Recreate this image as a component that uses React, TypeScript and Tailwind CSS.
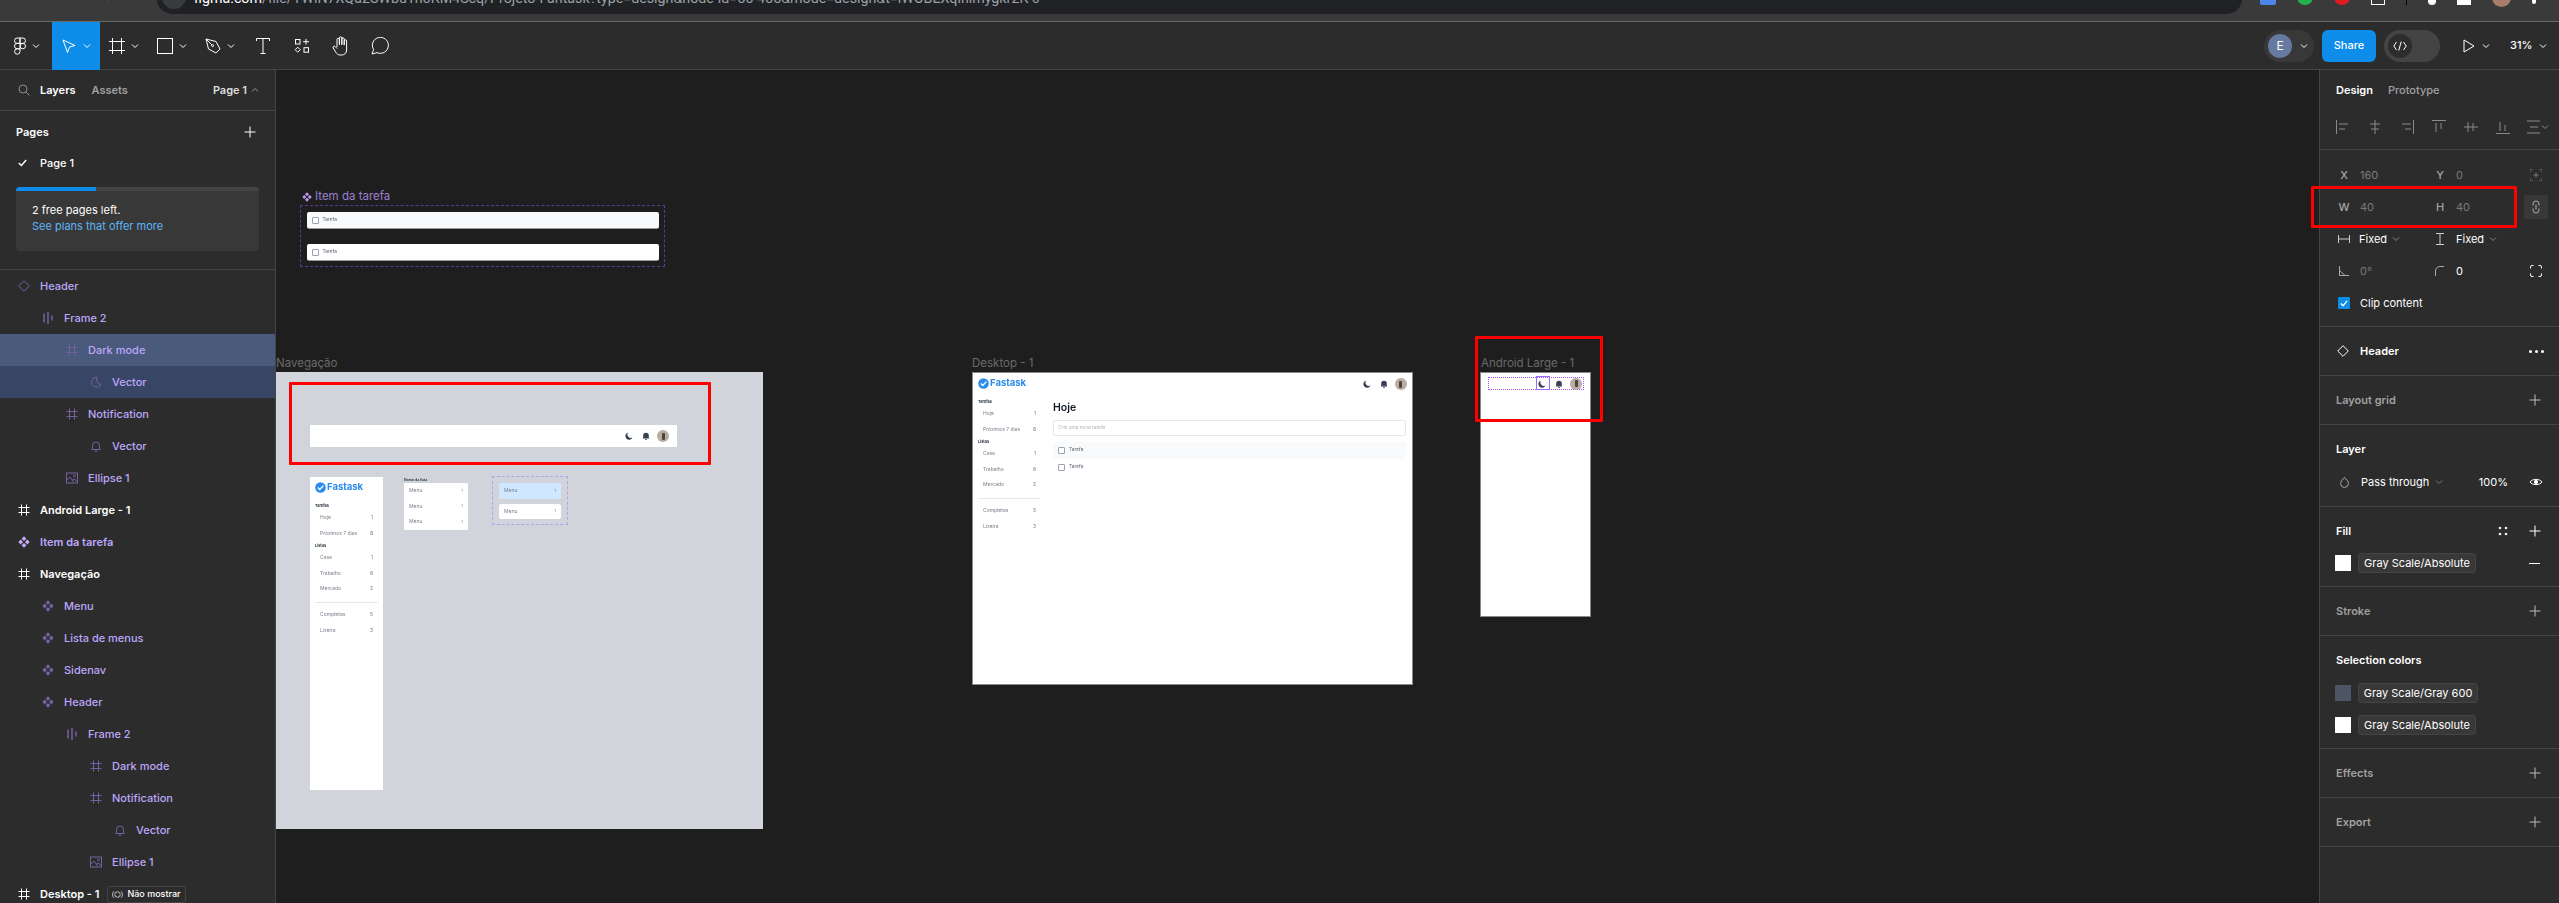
import React from "react";

const cn = (...a: (string | false | undefined)[]) => a.filter(Boolean).join(" ");

type IP = { className?: string; size?: number };
const Ic = ({ className, size = 16, children, vb = 16 }: IP & { children: React.ReactNode; vb?: number }) => (
  <svg width={size} height={size} viewBox={`0 0 ${vb} ${vb}`} fill="none" stroke="currentColor" strokeWidth={1} className={cn("shrink-0", className)}>
    {children}
  </svg>
);
const Chev = ({ className }: IP) => (
  <svg width="8" height="8" viewBox="0 0 8 8" fill="none" stroke="currentColor" strokeWidth={1} className={cn("shrink-0", className)}><path d="M1 2.5 4 5.5 7 2.5" /></svg>
);
const Plus = ({ className, size = 12 }: IP) => (
  <Ic size={size} vb={12} className={className}><path d="M6 0.5v11M0.5 6h11" /></Ic>
);
const HashI = ({ className, size = 12 }: IP) => (
  <Ic size={size} vb={12} className={className}><path d="M3.5 .5v11M8.5 .5v11M.5 3.5h11M.5 8.5h11" /></Ic>
);
const Comp = ({ className, size = 12 }: IP) => (
  <svg width={size} height={size} viewBox="0 0 12 12" fill="currentColor" className={cn("shrink-0", className)}>
    <path d="M6 .3 8.4 2.700 6 5.100 3.600 2.700ZM2.700 3.600 5.100 6 2.700 8.400 .3 6ZM9.300 3.600 11.700 6 9.300 8.400 6.900 6ZM6 6.900 8.400 9.300 6 11.700 3.600 9.300Z" />
  </svg>
);
const Diamond = ({ className, size = 12 }: IP) => (
  <Ic size={size} vb={12} className={className}><path d="M6 .7 11.3 6 6 11.3 .7 6Z" /></Ic>
);
const Bars = ({ className }: IP) => (
  <Ic size={12} vb={12} className={className} ><path d="M2 1.5v9M6 0v12M10 3.5v5" strokeWidth={1.5} /></Ic>
);
const MoonI = ({ className, size = 12 }: IP) => (
  <Ic size={size} vb={12} className={className}><path d="M7 1.2A5 5 0 1 0 11 8.6 5.5 5.5 0 0 1 7 1.2Z" /></Ic>
);
const BellI = ({ className, size = 12 }: IP) => (
  <Ic size={size} vb={12} className={className}><path d="M2.5 8.5V5.5a3.5 3.5 0 0 1 7 0v3l1 1h-9ZM4.7 11h2.6" /></Ic>
);
const ImageI = ({ className, size = 12 }: IP) => (
  <Ic size={size} vb={12} className={className}><rect x=".5" y="1" width="11" height="10" /><path d="M.5 8.5 4 5l4 5.5M6.5 8l1.5-1 3.5 2.5" /><circle cx="8.5" cy="3.7" r="1" /></Ic>
);

const iconMap: Record<string, React.FC<IP>> = { hash: HashI, comp: Comp, diamond: Diamond, bars: Bars, moon: MoonI, bell: BellI, image: ImageI };

type Layer = { n: string; l: number; i: string; top?: boolean; bg?: string; badge?: boolean };
const layers: Layer[] = [
  { n: "Header", l: 0, i: "diamond" },
  { n: "Frame 2", l: 1, i: "bars" },
  { n: "Dark mode", l: 2, i: "hash", bg: "bg-[#4a5a7c]" },
  { n: "Vector", l: 3, i: "moon", bg: "bg-[#394564]" },
  { n: "Notification", l: 2, i: "hash" },
  { n: "Vector", l: 3, i: "bell" },
  { n: "Ellipse 1", l: 2, i: "image" },
  { n: "Android Large - 1", l: 0, i: "hash", top: true },
  { n: "Item da tarefa", l: 0, i: "comp" },
  { n: "Navegação", l: 0, i: "hash", top: true },
  { n: "Menu", l: 1, i: "comp" },
  { n: "Lista de menus", l: 1, i: "comp" },
  { n: "Sidenav", l: 1, i: "comp" },
  { n: "Header", l: 1, i: "comp" },
  { n: "Frame 2", l: 2, i: "bars" },
  { n: "Dark mode", l: 3, i: "hash" },
  { n: "Notification", l: 3, i: "hash" },
  { n: "Vector", l: 4, i: "bell" },
  { n: "Ellipse 1", l: 3, i: "image" },
  { n: "Desktop - 1", l: 0, i: "hash", top: true, badge: true },
];

const indentClass = ["pl-[18px]", "pl-[42px]", "pl-[66px]", "pl-[90px]", "pl-[114px]"];

function LayerRow({ r }: { r: Layer }) {
  const Icon = iconMap[r.i];
  const isComp = r.n === "Item da tarefa";
  return (
    <div className={cn("h-8 shrink-0 flex items-center", indentClass[r.l], r.bg)}>
      <Icon className={r.top ? "text-white" : isComp ? "text-[#c4a8f5]" : "text-[#75609f]"} />
      <span className={cn("ml-[10px] text-[11px]", r.top ? "text-white font-semibold" : "text-[#bda6fb] font-medium", isComp && "font-semibold")}>{r.n}</span>
      {r.badge && (
        <span className="ml-2 h-[17px] px-1 flex items-center gap-1 rounded-[3px] border border-[#444] text-white text-[9px] font-medium">
          <svg width="11" height="11" viewBox="0 0 12 12" fill="none" stroke="#ccc"><circle cx="6" cy="6" r="3" /><path d="M2 2.5a5 5 0 0 0 0 7M10 2.5a5 5 0 0 1 0 7" /></svg>
          Não mostrar
        </span>
      )}
    </div>
  );
}

function LeftPanel() {
  return (
    <aside className="w-[276px] shrink-0 bg-[#2c2c2c] border-r border-[#444] flex flex-col overflow-hidden">
      <div className="h-[41px] shrink-0 border-b border-[#444] flex items-center pl-[18px] pr-4 text-[11px] font-semibold">
        <svg width="12" height="12" viewBox="0 0 12 12" fill="none" stroke="#8c8c8c"><circle cx="5" cy="5" r="4" /><path d="m8 8 3.5 3.5" /></svg>
        <span className="ml-[10px] text-white">Layers</span>
        <span className="ml-4 text-[#a0a0a0]">Assets</span>
        <span className="ml-auto text-[#dcdcdc]">Page 1</span>
        <Chev className="ml-1 rotate-180 text-[#999]" />
      </div>
      <div className="h-[159px] shrink-0 border-b border-[#444] flex flex-col">
        <div className="h-[40px] shrink-0 flex items-center justify-between pl-4 pr-[19px] pt-[2px]">
          <span className="text-[11px] font-semibold text-white">Pages</span>
          <Plus className="text-white" />
        </div>
        <div className="h-[24px] shrink-0 flex items-center pl-[18px] text-[11px] font-medium text-white">
          <svg width="9" height="8" viewBox="0 0 9 8" fill="none" stroke="#fff" strokeWidth={1.4}><path d="M.8 4 3.4 6.5 8.2 1" /></svg>
          <span className="ml-[13px]">Page 1</span>
        </div>
        <div className="mx-4 mt-[12px] h-[64px] shrink-0 bg-[#383838] rounded-[4px] overflow-hidden">
          <div className="h-1 bg-[#444]"><div className="h-1 w-[80px] bg-[#0d8ce9]" /></div>
          <div className="pl-4 pt-[11px] text-[11px] leading-4 text-white">
            <div>2 free pages left.</div>
            <div className="text-[#5eb5f7]">See plans that offer more</div>
          </div>
        </div>
      </div>
      <div className="flex flex-col">
        {layers.map((r, i) => <LayerRow key={i} r={r} />)}
      </div>
    </aside>
  );
}

function Toolbar() {
  const cell = "h-12 flex items-center justify-center gap-[6px] shrink-0";
  return (
    <header className="h-[48px] shrink-0 bg-[#2c2c2c] border-b border-[#444] flex items-center text-white">
      <div className={cn(cell, "w-[52px] pl-[2px]")}>
        <svg width="12" height="18" viewBox="0 0 12 18" fill="none" stroke="#fff"><path d="M6 1H3.2a2.7 2.7 0 0 0 0 5.4H6ZM6 1h2.8a2.7 2.7 0 0 1 0 5.4H6ZM6 6.4H3.2a2.7 2.7 0 0 0 0 5.4H6ZM6 11.8H3.2A2.7 2.7 0 1 0 6 14.5Z" /><circle cx="8.8" cy="9.1" r="2.7" /></svg>
        <Chev />
      </div>
      <div className={cn(cell, "w-[48px] bg-[#0d8ce9]")}>
        <svg width="16" height="16" viewBox="0 0 16 16" fill="none" stroke="#fff"><path d="M2 2 14 7.5 8.5 9 6.5 14.5Z" /></svg>
        <Chev />
      </div>
      <div className={cn(cell, "w-[48px]")}>
        <svg width="16" height="16" viewBox="0 0 16 16" fill="none" stroke="#fff"><path d="M3.5 0v16M12.5 0v16M0 3.5h16M0 12.5h16" /></svg>
        <Chev />
      </div>
      <div className={cn(cell, "w-[48px]")}>
        <svg width="16" height="16" viewBox="0 0 16 16" fill="none" stroke="#fff"><rect x=".5" y=".5" width="15" height="15" /></svg>
        <Chev />
      </div>
      <div className={cn(cell, "w-[48px]")}>
        <svg width="16" height="16" viewBox="0 0 16 16" fill="none" stroke="#fff"><path d="M1 1 11 3.5 15 11 11 15 3.5 11ZM1 1l6 6" /><circle cx="7.6" cy="7.6" r="1" /></svg>
        <Chev />
      </div>
      <div className="w-[38px] h-12 flex items-center justify-center shrink-0">
        <svg width="14" height="16" viewBox="0 0 14 16" fill="none" stroke="#fff"><path d="M.5 3V.5h13V3M7 .5v15M4.5 15.5h5" /></svg>
      </div>
      <div className="w-[40px] h-12 flex items-center justify-center shrink-0">
        <svg width="16" height="16" viewBox="0 0 16 16" fill="none" stroke="#fff"><rect x="1.5" y="1.5" width="4.5" height="4.5" /><path d="M12 1v5.5M9 3.7h6" /><path d="M3.7 9.2 6.2 11.7 3.7 14.2 1.2 11.7Z" /><rect x="10" y="9.7" width="4.5" height="4.5" /></svg>
      </div>
      <div className="w-[38px] h-12 flex items-center justify-center shrink-0">
        <svg width="18" height="20" viewBox="0 0 18 20" fill="none" stroke="#fff"><path d="M5 11V3.5a1.2 1.2 0 0 1 2.4 0V9M7.4 8V2a1.2 1.2 0 0 1 2.4 0v7M9.8 8.5V3a1.2 1.2 0 0 1 2.4 0v6M12.2 9V5a1.2 1.2 0 0 1 2.4 0v9c0 3-2 5-5 5H8c-2 0-3-1-4-2.5L1.2 12c-.8-1.4 1-2.6 2-1.4L5 12.5" /></svg>
      </div>
      <div className="w-[40px] h-12 flex items-center justify-center shrink-0">
        <svg width="18" height="18" viewBox="0 0 18 18" fill="none" stroke="#fff"><path d="M1 17 2.6 12.6A8 8 0 1 1 6 15.6Z" /></svg>
      </div>
      <div className="flex-1" />
      <div className="h-8 w-[50px] rounded-full bg-[#383838] flex items-center pl-1 gap-2 shrink-0">
        <span className="w-6 h-6 rounded-full bg-[#667aa1] flex items-center justify-center text-[12px]">E</span>
        <Chev />
      </div>
      <div className="ml-2 h-8 w-[54px] rounded-[6px] bg-[#0d8ce9] flex items-center justify-center text-[11px] font-medium shrink-0">Share</div>
      <div className="ml-2 h-8 w-[56px] rounded-full bg-[#444] flex items-center pl-1 shrink-0">
        <span className="w-6 h-6 rounded-full bg-[#2c2c2c] flex items-center justify-center">
          <svg width="14" height="10" viewBox="0 0 14 10" fill="none" stroke="#fff"><path d="M3.5 1 .8 5l2.7 4M10.5 1l2.7 4-2.7 4M8.3 .5 5.7 9.5" /></svg>
        </span>
      </div>
      <svg width="12" height="14" viewBox="0 0 12 14" fill="none" stroke="#fff" className="ml-[23px] shrink-0"><path d="M1 1v12l10-6Z" /></svg>
      <Chev className="ml-[7px]" />
      <span className="ml-[20px] w-[22px] shrink-0 text-[11px] font-medium whitespace-nowrap">31%</span>
      <Chev className="ml-[7px] mr-3" />
    </header>
  );
}

function ChromeBar() {
  return (
    <div className="h-[22px] shrink-0 bg-[#3a3a3a] border-b border-[#6a6a6a] flex items-end pb-[7px] overflow-hidden">
      <div className="w-[157px] shrink-0 flex items-center gap-[36px] pl-[18px] mb-[8px] text-[#d0d0d0] h-[20px]">
        <svg width="12" height="14" viewBox="0 0 12 14" fill="none" stroke="currentColor" strokeWidth={1.5}><path d="M8 1 2 7l6 6" /></svg>
        <svg width="12" height="14" viewBox="0 0 12 14" fill="none" stroke="#777" strokeWidth={1.5}><path d="M4 1l6 6-6 6" /></svg>
        <svg width="16" height="16" viewBox="0 0 16 16" fill="none" stroke="currentColor" strokeWidth={1.5}><circle cx="8" cy="8" r="6.5" /></svg>
        <svg width="14" height="14" viewBox="0 0 14 14" fill="currentColor"><path d="M0 0h4v14H0ZM9 0h4v14H9Z" /></svg>
      </div>
      <div className="w-[2085px] h-[30px] shrink-0 rounded-full bg-[#202124] flex items-center pl-[37px] pr-[80px] overflow-hidden relative">
        <span className="text-[14.250px] whitespace-nowrap font-['Roboto',sans-serif] text-[#9aa0a6]">
          <span className="text-white">figma.com</span>/file/TWlN7XQa2SWbu1n3KM4Scq/Projeto-Fantask?type=design&amp;node-id=55-455&amp;mode=design&amp;t=lWOBEXqlhlmygkr2K-0
        </span>
        <span className="absolute left-[5px] top-[1px] w-[24px] h-[24px] rounded-full bg-[#3a3b3e]" />
      </div>
      <div className="flex-1 flex items-center gap-[21px] pl-[18px] h-[20px] mb-[7px] overflow-hidden">
        <span className="w-4 h-4 bg-[#4b86e8] rounded-[2px] shrink-0" />
        <span className="w-4 h-4 bg-[#22b14c] rounded-full shrink-0" />
        <span className="w-4 h-4 bg-[#e01b24] rounded-full shrink-0" />
        <span className="w-[14px] h-[16px] border border-white bg-[#3a3a3a] shrink-0" />
        <span className="w-[1px] h-4 bg-black shrink-0" />
        <span className="w-2 h-[16px] bg-white rounded-full shrink-0" />
        <span className="w-[14px] h-[16px] bg-white shrink-0" />
        <span className="w-[19px] h-[20px] bg-[#a87d6c] rounded-full shrink-0" />
        <span className="w-1 h-[14px] bg-white rounded-full shrink-0" />
      </div>
    </div>
  );
}

const AlignIcon = ({ d }: { d: string }) => (
  <svg width="14" height="14" viewBox="0 0 14 14" fill="none" stroke="#8a8a8a"><path d={d} /></svg>
);
const alignPaths = [
  "M.5 0v14M3 4h9M3 9h6",
  "M7 0v14M2 4h10M3 9h8",
  "M13.5 0v14M2 4h9M5 9h6",
  "M0 .5h14M4 3v9M9 3v6",
  "M0 7h14M4 2v10M9 3v8",
  "M0 13.5h14M4 2v9M9 5v6",
];

const SectionHead = ({ t, dim, extra }: { t: string; dim?: boolean; extra?: React.ReactNode }) => (
  <div className="h-[49px] border-b border-[#444] flex items-center pl-4 pr-[18px] shrink-0">
    <span className={cn("text-[11px] font-semibold", dim ? "text-[#a0a0a0]" : "text-white")}>{t}</span>
    <span className="ml-auto flex items-center gap-[16px]">{extra}<Plus className={dim ? "text-[#bbb]" : "text-white"} /></span>
  </div>
);

const Swatch = ({ c, t, w }: { c: string; t: string; w: string }) => (
  <div className="h-8 flex items-center pl-[15px] pr-[18px]">
    <span className={cn("w-4 h-4 shrink-0", c)} />
    <span className={cn("ml-[7px] h-5 rounded-[3px] bg-[#383838] border border-[#444] flex items-center justify-center text-[11px] text-white", w)}>{t}</span>
  </div>
);

function PropRow({ a, b, c }: { a: React.ReactNode; b: React.ReactNode; c?: React.ReactNode }) {
  return (
    <div className="h-8 grid grid-cols-[96px_95px_18px] items-center pl-4 text-[11px]">
      <div className="flex items-center">{a}</div>
      <div className="flex items-center">{b}</div>
      <div className="flex items-center justify-center">{c}</div>
    </div>
  );
}
const L = ({ t }: { t: string }) => <span className="w-4 text-center text-[#a5a5a5] font-medium">{t}</span>;
const V = ({ t, w }: { t: string; w?: boolean }) => <span className={cn("ml-2", w ? "text-white" : "text-[#7a7a7a]")}>{t}</span>;

function RightPanel() {
  return (
    <aside className="w-[240px] shrink-0 bg-[#2c2c2c] border-l border-[#444] flex flex-col overflow-hidden">
      <div className="h-[41px] flex items-center pl-4 gap-[15px] text-[11px] font-semibold shrink-0">
        <span className="text-white">Design</span>
        <span className="text-[#a0a0a0] font-medium">Prototype</span>
      </div>
      <div className="h-[39px] border-b border-[#444] flex items-center pl-4 gap-[18px] pb-[6px] shrink-0">
        {alignPaths.map((d) => <AlignIcon key={d} d={d} />)}
        <span className="flex items-center -ml-[1px]">
          <AlignIcon d="M0 1h13M3 7h8M0 13h13" />
          <Chev className="text-[#8a8a8a]" />
        </span>
      </div>
      <div className="h-[177px] border-b border-[#444] shrink-0 pt-[9px]">
        <PropRow a={<><L t="X" /><V t="160" /></>} b={<><L t="Y" /><V t="0" /></>} c={
          <svg width="12" height="12" viewBox="0 0 12 12" fill="none" stroke="#777"><path d="M0 3V0h3M9 0h3v3M12 9v3H9M3 12H0V9M6 3.5v5M3.5 6h5" /></svg>
        } />
        <PropRow a={<><L t="W" /><V t="40" /></>} b={<><L t="H" /><V t="40" /></>} c={
          <span className="w-6 h-6 rounded-[2px] bg-[#383838] flex items-center justify-center shrink-0">
            <svg width="8" height="14" viewBox="0 0 8 14" fill="none" stroke="#aaa"><path d="M1 5.500V4a3 3 0 0 1 6 0v1.500M1 8.500V10a3 3 0 0 0 6 0V8.500M4 4.500v5" /></svg>
          </span>
        } />
        <PropRow
          a={<><svg width="12" height="8" viewBox="0 0 12 8" fill="none" stroke="#ccc" className="ml-[2px]"><path d="M.5 0v8M11.500 0v8M.5 4h11" /></svg><span className="ml-[9px] text-white">Fixed</span><Chev className="ml-[5px] text-[#888]" /></>}
          b={<><svg width="8" height="12" viewBox="0 0 8 12" fill="none" stroke="#ccc" className="ml-1"><path d="M0 .5h8M0 11.500h8M4 .5v11" /></svg><span className="ml-[12px] text-white">Fixed</span><Chev className="ml-[5px] text-[#888]" /></>}
        />
        <PropRow
          a={<><svg width="10" height="10" viewBox="0 0 10 10" fill="none" stroke="#aaa" className="ml-[3px]"><path d="M.5 0v9.500H10M.5 4.500 6 9.500" /></svg><span className="ml-[11px] text-[#7a7a7a]">0°</span></>}
          b={<><svg width="10" height="10" viewBox="0 0 10 10" fill="none" stroke="#aaa" className="ml-[3px]"><path d="M.5 10V5a4.500 4.500 0 0 1 4.500-4.500H9" /></svg><span className="ml-[11px] text-white">0</span></>}
          c={<svg width="12" height="12" viewBox="0 0 12 12" fill="none" stroke="#fff"><path d="M.5 3.500V2A1.500 1.500 0 0 1 2 .5h1.500M8.500 .5H10A1.500 1.500 0 0 1 11.500 2v1.500M11.500 8.500V10A1.500 1.500 0 0 1 10 11.500H8.500M3.500 11.500H2A1.500 1.500 0 0 1 .5 10V8.500" /></svg>}
        />
        <div className="h-8 flex items-center pl-[18px] text-[11px] text-white">
          <span className="w-3 h-3 bg-[#0d8ce9] rounded-[1px] flex items-center justify-center">
            <svg width="8" height="7" viewBox="0 0 9 8" fill="none" stroke="#fff" strokeWidth={1.5}><path d="M.8 4 3.4 6.500 8.200 1" /></svg>
          </span>
          <span className="ml-[10px]">Clip content</span>
        </div>
      </div>
      <div className="h-[49px] border-b border-[#444] flex items-center pl-[17px] pr-[15px] shrink-0">
        <Diamond className="text-white" />
        <span className="ml-[11px] text-[11px] font-semibold text-white">Header</span>
        <span className="ml-auto flex gap-[3px]">
          <i className="w-[3px] h-[3px] rounded-full bg-white" /><i className="w-[3px] h-[3px] rounded-full bg-white" /><i className="w-[3px] h-[3px] rounded-full bg-white" />
        </span>
      </div>
      <SectionHead t="Layout grid" dim />
      <div className="h-[82px] border-b border-[#444] shrink-0 flex flex-col">
        <div className="h-[49px] flex items-center pl-4 text-[11px] font-semibold text-white">Layer</div>
        <div className="h-8 -mt-[8px] flex items-center pl-[20px] text-[11px] text-white">
          <svg width="9" height="11" viewBox="0 0 9 11" fill="none" stroke="#aaa"><path d="M4.500.5 7.500 3.800a4 4 0 1 1-6 0Z" /></svg>
          <span className="ml-[12px]">Pass through</span>
          <Chev className="ml-[6px] text-[#777]" />
          <span className="ml-auto">100%</span>
          <svg width="14" height="10" viewBox="0 0 14 10" fill="none" stroke="#fff" className="ml-[21px] mr-4"><path d="M1 5C3 1.500 11 1.500 13 5 11 8.500 3 8.500 1 5Z" /><circle cx="7" cy="5" r="1.700" fill="#fff" /></svg>
        </div>
      </div>
      <div className="h-[80px] border-b border-[#444] shrink-0">
        <div className="h-[48px] flex items-center pl-4 pr-[18px]">
          <span className="text-[11px] font-semibold text-white">Fill</span>
          <svg width="10" height="10" viewBox="0 0 10 10" fill="#eee" className="ml-auto mr-[21px]"><circle cx="2" cy="2" r="1.300" /><circle cx="8" cy="2" r="1.300" /><circle cx="2" cy="8" r="1.300" /><circle cx="8" cy="8" r="1.300" /></svg>
          <Plus className="text-white" />
        </div>
        <div className="-mt-[8px] flex items-center">
          <div className="flex-1"><Swatch c="bg-white" t="Gray Scale/Absolute" w="w-[118px]" /></div>
          <span className="w-[11px] h-[1px] bg-white mr-[19px]" />
        </div>
      </div>
      <SectionHead t="Stroke" dim />
      <div className="h-[113px] border-b border-[#444] shrink-0">
        <div className="h-[49px] flex items-center pl-4 text-[11px] font-semibold text-white">Selection colors</div>
        <div className="-mt-[8px]">
          <Swatch c="bg-[#4b5563]" t="Gray Scale/Gray 600" w="w-[120px]" />
          <Swatch c="bg-white" t="Gray Scale/Absolute" w="w-[118px]" />
        </div>
      </div>
      <SectionHead t="Effects" dim />
      <SectionHead t="Export" dim />
    </aside>
  );
}

const BLUR = "blur-[0.45px]";

const Avatar = () => (
  <span className="relative w-3 h-3 rounded-full bg-[#b9aca0] overflow-hidden shrink-0 flex items-center justify-center">
    <span className="w-[3px] h-[7px] rounded-[1px] bg-[#4b4540]" />
  </span>
);
const MoonF = () => (
  <svg width="8" height="8" viewBox="0 0 8 8" fill="#374151"><path d="M3 .5A3.700 3.700 0 1 0 7.500 5.500 3.500 3.500 0 0 1 3 .5Z" /></svg>
);
const BellF = () => (
  <svg width="8" height="8" viewBox="0 0 8 8" fill="#374151"><path d="M1.200 6V3.500a2.800 2.800 0 0 1 5.600 0V6l.7.600H.5ZM3 7.100h2v.7H3Z" /></svg>
);
const HeaderIcons = () => (
  <div className="flex items-center gap-[5px]">
    <span className="w-3 h-3 flex items-center justify-center"><MoonF /></span>
    <span className="w-3 h-3 flex items-center justify-center"><BellF /></span>
    <Avatar />
  </div>
);

const Logo = () => (
  <div className="h-5 flex items-center pl-[4.500px]">
    <svg width="11" height="11" viewBox="0 0 11 11"><circle cx="5.500" cy="5.500" r="5.300" fill="#2b8ceb" /><path d="M2.800 5.500 4.800 7.500 8.400 3.600" fill="none" stroke="#fff" strokeWidth="1.300" /></svg>
    <span className="ml-[1.500px] text-[9.500px] leading-none font-bold text-[#2b8ceb]">Fastask</span>
  </div>
);

const NavRow = ({ t, n }: { t: string; n: string }) => (
  <div className="h-[15.5px] flex items-center justify-between pl-[10px] pr-[10px] text-[5px] text-[#7a818c]">
    <span>{t}</span><span>{n}</span>
  </div>
);
const NavLabel = ({ t, cls }: { t: string; cls: string }) => (
  <div className={cn("h-[6px] flex items-center pl-[5px] text-[3.800px] font-bold text-[#1f2937]", cls)}>{t}</div>
);

function SideNav({ className }: { className?: string }) {
  return (
    <div className={cn("w-[73px] bg-white", BLUR, className)}>
      <Logo />
      <NavLabel t="Tarefas" cls="mt-[6px]" />
      <div className="mt-[1.250px]">
        <NavRow t="Hoje" n="1" />
        <NavRow t="Próximos 7 dias" n="8" />
      </div>
      <NavLabel t="Listas" cls="mt-[1.750px]" />
      <div className="mt-[1.250px]">
        <NavRow t="Casa" n="1" />
        <NavRow t="Trabalho" n="6" />
        <NavRow t="Mercado" n="2" />
      </div>
      <div className="mt-[5px] mx-[5px] h-[0.500px] bg-[#e5e7eb]" />
      <div className="mt-[5px]">
        <NavRow t="Completas" n="5" />
        <NavRow t="Lixeira" n="3" />
      </div>
    </div>
  );
}

const TaskRow = ({ bg, rounded }: { bg: string; rounded?: boolean }) => (
  <div className={cn("h-[17px] flex items-center pl-[5px]", bg, rounded && "rounded-[2px]")}>
    <span className="w-[7px] h-[7px] rounded-[1px] border border-[#9ca3af] bg-white shrink-0" />
    <span className="ml-1 text-[4.800px] text-[#5b6370]">Tarefa</span>
  </div>
);

const MenuItem = ({ bg }: { bg: string }) => (
  <div className={cn("h-[15.500px] flex items-center justify-between px-[5px] text-[5px] text-[#7a818c] rounded-[2px]", bg)}>
    <span>Menu</span><span className="text-[4px]">1</span>
  </div>
);

const FrameLabel = ({ t, className }: { t: string; className: string }) => (
  <div className={cn("absolute text-[11.500px] text-[#6a6a6a] leading-none whitespace-nowrap", className)}>{t}</div>
);
const RedBox = ({ className }: { className: string }) => (
  <div className={cn("absolute border-[3px] border-[#ff0000] rounded-[1px] pointer-events-none", className)} />
);

function Canvas() {
  return (
    <main className="relative flex-1 bg-[#1e1e1e] overflow-hidden">
      {/* Item da tarefa */}
      <div className="absolute left-[26px] top-[121px] flex items-center gap-[3px] text-[11.500px] leading-none text-[#9c7fce]">
        <Comp size={10} className="text-[#c19bf7]" />Item da tarefa
      </div>
      <div className="absolute left-[24px] top-[135px] w-[365px] h-[62px] border border-dashed border-[#5a3a96] rounded-[1px] p-[5.500px] flex flex-col gap-[15px]">
        <div className={cn("rounded-[2px] overflow-hidden border-b border-[#999]", BLUR)}><TaskRow bg="bg-[#f9fafb]" /></div>
        <div className={cn("rounded-[2px] overflow-hidden border-b border-[#999]", BLUR)}><TaskRow bg="bg-white" /></div>
      </div>

      {/* Navegação */}
      <FrameLabel t="Navegação" className="left-0 top-[288px]" />
      <div className="absolute left-0 top-[302px] w-[487px] h-[457px] bg-[#d1d5db]">
        <div className="absolute left-[34px] top-[53px] w-[367px] h-[22px] bg-white flex items-center justify-end pr-[8px]"><HeaderIcons /></div>
        <SideNav className="absolute left-[34px] top-[105px] h-[313px]" />
        <div className={cn("absolute left-[128px] top-[107px]", BLUR)}>
          <div className="h-[4px] flex items-center text-[3.500px] font-bold text-[#374151]">Nome da lista</div>
          <div className="w-[64px] bg-white rounded-[2px]">
            <MenuItem bg="bg-white" /><MenuItem bg="bg-white" /><MenuItem bg="bg-white" />
          </div>
        </div>
        <div className="absolute left-[216px] top-[104px] w-[76px] h-[49px] border border-dashed border-[#b79ff0] rounded-[1px] p-[6px] flex flex-col gap-[5px]">
          <div className={BLUR}><MenuItem bg="bg-[#cfe8ff]" /></div>
          <div className={BLUR}><MenuItem bg="bg-white" /></div>
        </div>
      </div>

      {/* Desktop */}
      <FrameLabel t="Desktop - 1" className="left-[696px] top-[288px]" />
      <div className="absolute left-[696px] top-[302px] w-[441px] h-[313px] bg-white border border-[#888] flex">
        <SideNav className="shrink-0" />
        <div className="flex-1 flex flex-col pr-[6px] pl-[7px] relative">
          <div className="h-[22px] flex items-center justify-end -mr-[0.500px]"><HeaderIcons /></div>
          <div className={BLUR}>
            <div className="mt-[1px] text-[10.500px] leading-[24px] font-semibold text-[#111827] h-[24px]">Hoje</div>
            <div className="h-[16px] border border-[#e5e7eb] rounded-[2px] flex items-center pl-[4px] text-[4.800px] text-[#b0b5bd]">Crie uma nova tarefa</div>
            <div className="mt-[5.500px]"><TaskRow bg="bg-[#f9fafb]" rounded /></div>
            <TaskRow bg="bg-white" />
          </div>
        </div>
      </div>

      {/* Android */}
      <FrameLabel t="Android Large - 1" className="left-[1205px] top-[288px]" />
      <div className="absolute left-[1204px] top-[302px] w-[111px] h-[245px] bg-white border border-[#888]">
        <div className="absolute left-[7px] top-[4px] w-[96px] h-[13px] border border-dotted border-[#a855f7] flex items-center justify-end pr-[1px]"><HeaderIcons /></div>
        <div className="absolute left-[55px] top-[3px] w-[14px] h-[14px] border border-[#9b6dff]" />
      </div>

      <RedBox className="left-[13px] top-[312px] w-[422px] h-[83px]" />
      <RedBox className="left-[1199px] top-[266px] w-[128px] h-[86px]" />
    </main>
  );
}

export default function App() {
  return (
    <div className="w-[2559px] h-[903px] overflow-hidden flex flex-col bg-[#2c2c2c] font-['Inter',sans-serif]">
      <ChromeBar />
      <Toolbar />
      <div className="flex-1 flex min-h-0 relative">
        <LeftPanel />
        <Canvas />
        <RightPanel />
        <RedBox className="left-[2311px] top-[116px] w-[206px] h-[42px]" />
      </div>
    </div>
  );
}
